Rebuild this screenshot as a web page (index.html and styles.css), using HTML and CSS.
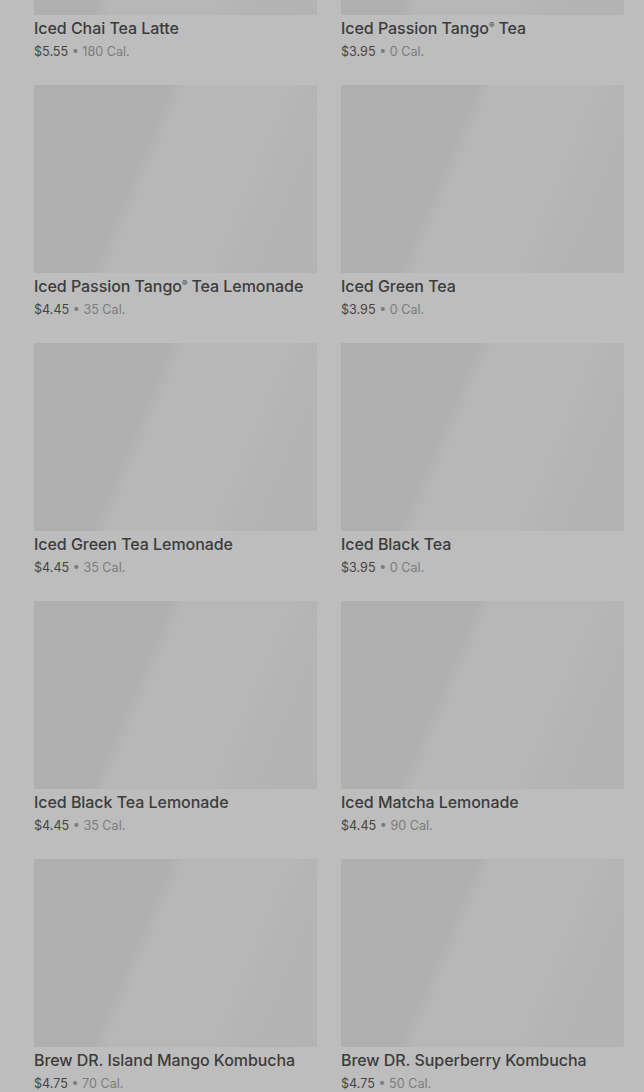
FILE: index.html
```html
<!DOCTYPE html>
<html lang="en">
<head>
<meta charset="utf-8">
<title>Menu</title>
<link rel="stylesheet" href="styles.css">
</head>
<body>
<main class="grid">
  <article class="card"><div class="thumb"></div><h3 class="name">Iced Chai Tea Latte</h3><p class="meta"><span class="price">$5.55</span> • 180 Cal.</p></article>
  <article class="card"><div class="thumb"></div><h3 class="name">Iced Passion Tango<sup>®</sup> Tea</h3><p class="meta"><span class="price">$3.95</span> • 0 Cal.</p></article>
  <article class="card"><div class="thumb"></div><h3 class="name">Iced Passion Tango<sup>®</sup> Tea Lemonade</h3><p class="meta"><span class="price">$4.45</span> • 35 Cal.</p></article>
  <article class="card"><div class="thumb"></div><h3 class="name">Iced Green Tea</h3><p class="meta"><span class="price">$3.95</span> • 0 Cal.</p></article>
  <article class="card"><div class="thumb"></div><h3 class="name">Iced Green Tea Lemonade</h3><p class="meta"><span class="price">$4.45</span> • 35 Cal.</p></article>
  <article class="card"><div class="thumb"></div><h3 class="name">Iced Black Tea</h3><p class="meta"><span class="price">$3.95</span> • 0 Cal.</p></article>
  <article class="card"><div class="thumb"></div><h3 class="name">Iced Black Tea Lemonade</h3><p class="meta"><span class="price">$4.45</span> • 35 Cal.</p></article>
  <article class="card"><div class="thumb"></div><h3 class="name">Iced Matcha Lemonade</h3><p class="meta"><span class="price">$4.45</span> • 90 Cal.</p></article>
  <article class="card"><div class="thumb"></div><h3 class="name">Brew DR. Island Mango Kombucha</h3><p class="meta"><span class="price">$4.75</span> • 70 Cal.</p></article>
  <article class="card"><div class="thumb"></div><h3 class="name">Brew DR. Superberry Kombucha</h3><p class="meta"><span class="price">$4.75</span> • 50 Cal.</p></article>
</main>
</body>
</html>
```
FILE: styles.css
```css
html, body {
  margin: 0;
  padding: 0;
  background: #bdbdbd;
  overflow: hidden;
}
body {
  font-family: Inter, Roboto, "Noto Sans", sans-serif;
  height: 1092px;
}
.grid {
  display: grid;
  grid-template-columns: 283px 283px;
  column-gap: 24px;
  row-gap: 23px;
  padding: 0 20px 0 34px;
  margin-top: -173px;
}
.card {
  display: flex;
  flex-direction: column;
}
.thumb {
  height: 188px;
  background: linear-gradient(113deg, #b0b0b0 0%, #b0b0b0 38%, #b7b7b7 42%, #b7b7b7 70%, #b4b4b4 78%, #b3b3b3 100%);
}
.name {
  margin: 3px 0 0;
  font-size: 16px;
  line-height: 20px;
  font-weight: 500;
  letter-spacing: -0.05px;
  color: #3c3c3c;
  white-space: nowrap;
}
.name sup {
  font-size: 8px;
  line-height: 0;
  vertical-align: 6px;
}
.meta {
  margin: 4px 0 0;
  font-size: 12.6px;
  line-height: 20px;
  color: #7c7c7c;
}
.price {
  color: #454545;
}
```
